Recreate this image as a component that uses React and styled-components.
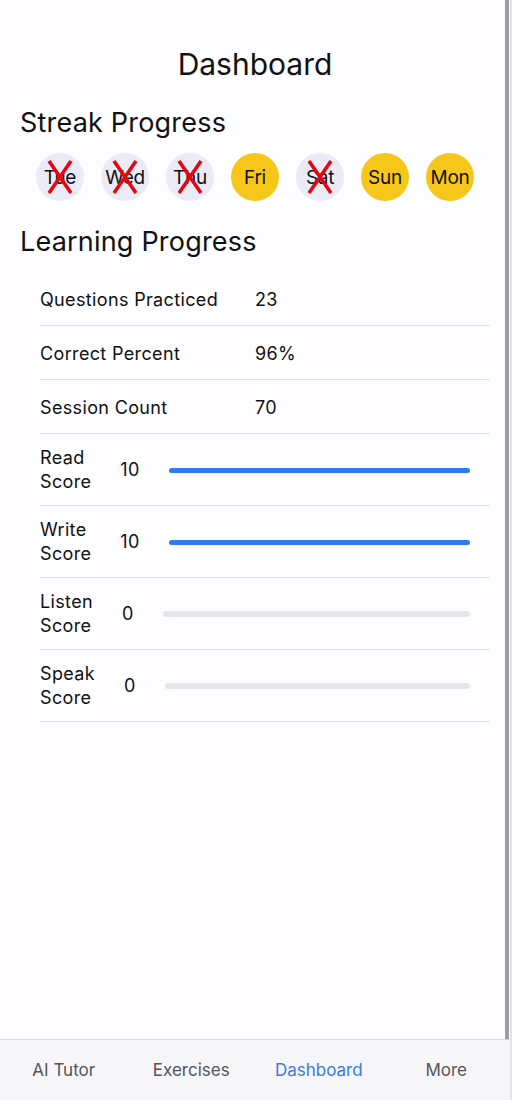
import React from 'react';
import styled, { createGlobalStyle } from 'styled-components';

const GlobalStyle = createGlobalStyle`
  html, body {
    margin: 0;
    padding: 0;
    background: #fdfcff;
  }
  body {
    font-family: Inter, "Noto Sans", "Liberation Sans", sans-serif;
    color: #111;
  }
  * {
    box-sizing: border-box;
  }
`;

const Frame = styled.div`
  display: flex;
  width: 512px;
  height: 1100px;
  overflow: hidden;
`;

const Main = styled.div`
  flex: 1;
  display: flex;
  flex-direction: column;
  position: relative;
`;

const EdgeStrip = styled.div`
  width: 2px;
  background: #e4e4e8;
`;

const ScrollThumb = styled.div`
  position: absolute;
  top: 0;
  right: 1px;
  width: 4px;
  height: 1039px;
  background: #9d9ca2;
`;

const Scroll = styled.div`
  flex: 1;
  padding-top: 46px;
`;

const Title = styled.h1`
  margin: 0;
  text-align: center;
  font-size: 30px;
  line-height: 36px;
  font-weight: 400;
`;

const SectionTitle = styled.h2`
  margin: ${p => p.$top}px 0 0 20px;
  font-size: 27px;
  line-height: 32px;
  font-weight: 400;
  letter-spacing: 0.2px;
`;

const StreakRow = styled.div`
  display: flex;
  justify-content: center;
  gap: 17px;
  margin-top: 14px;
`;

const Day = styled.div`
  position: relative;
  width: 48px;
  height: 48px;
  border-radius: 50%;
  background: ${p => (p.$done ? '#f7c61b' : '#ebebf7')};
  display: flex;
  align-items: center;
  justify-content: center;
  font-size: 19px;
  letter-spacing: -0.3px;
`;

const Cross = styled.svg`
  position: absolute;
  left: 11px;
  top: 6px;
`;

const List = styled.div`
  margin: 14px 20px 0 40px;
`;

const StatRow = styled.div`
  display: flex;
  align-items: center;
  height: 54px;
  padding-top: 2px;
  border-bottom: 1px solid #e2e2e6;
  font-size: 18px;
  letter-spacing: 0.35px;
`;

const StatLabel = styled.div`
  width: 215px;
`;

const ScoreRow = styled.div`
  display: flex;
  align-items: center;
  height: 72px;
  padding: 1px 20px 0 0;
  border-bottom: 1px solid #e2e2e6;
  font-size: 18px;
  line-height: 24px;
  letter-spacing: 0.35px;
  gap: 29px;
`;

const ScoreLabel = styled.div`
  width: min-content;
`;

const Track = styled.div`
  flex: 1;
  height: ${p => (p.$filled ? 5 : 6)}px;
  border-radius: 3px;
  background: ${p => (p.$filled ? '#2e7cf0' : '#e6e6e8')};
`;

const TabBar = styled.nav`
  display: grid;
  grid-template-columns: repeat(4, 1fr);
  height: 61px;
  border-top: 1px solid #d9d9dd;
  background: #f6f5f8;
`;

const Tab = styled.div`
  display: flex;
  justify-content: center;
  padding-top: 20px;
  font-size: 17px;
  color: ${p => (p.$active ? '#3a7bdc' : '#555558')};
`;

const days = [
  { name: 'Tue', done: false },
  { name: 'Wed', done: false },
  { name: 'Thu', done: false },
  { name: 'Fri', done: true },
  { name: 'Sat', done: false },
  { name: 'Sun', done: true },
  { name: 'Mon', done: true },
];

const stats = [
  ['Questions Practiced', '23'],
  ['Correct Percent', '96%'],
  ['Session Count', '70'],
];

const scores = [
  ['Read Score', 10],
  ['Write Score', 10],
  ['Listen Score', 0],
  ['Speak Score', 0],
];

const tabs = ['AI Tutor', 'Exercises', 'Dashboard', 'More'];

export default function App() {
  return (
    <>
      <GlobalStyle />
      <Frame>
        <Main>
          <Scroll>
            <Title>Dashboard</Title>
            <SectionTitle $top={25}>Streak Progress</SectionTitle>
            <StreakRow>
              {days.map(d => (
                <Day key={d.name} $done={d.done}>
                  {d.name}
                  {!d.done && (
                    <Cross width="26" height="36" viewBox="0 0 26 36">
                      <path d="M2 2 L24 34 M24 2 L2 34" stroke="#e30613" strokeWidth="3.6" fill="none" />
                    </Cross>
                  )}
                </Day>
              ))}
            </StreakRow>
            <SectionTitle $top={25}>Learning Progress</SectionTitle>
            <List>
              {stats.map(([label, value]) => (
                <StatRow key={label}>
                  <StatLabel>{label}</StatLabel>
                  <div>{value}</div>
                </StatRow>
              ))}
              {scores.map(([label, value]) => (
                <ScoreRow key={label}>
                  <ScoreLabel>{label}</ScoreLabel>
                  <div>{value}</div>
                  <Track $filled={value > 0} />
                </ScoreRow>
              ))}
            </List>
          </Scroll>
          <TabBar>
            {tabs.map(t => (
              <Tab key={t} $active={t === 'Dashboard'}>{t}</Tab>
            ))}
          </TabBar>
          <ScrollThumb />
        </Main>
        <EdgeStrip />
      </Frame>
    </>
  );
}
